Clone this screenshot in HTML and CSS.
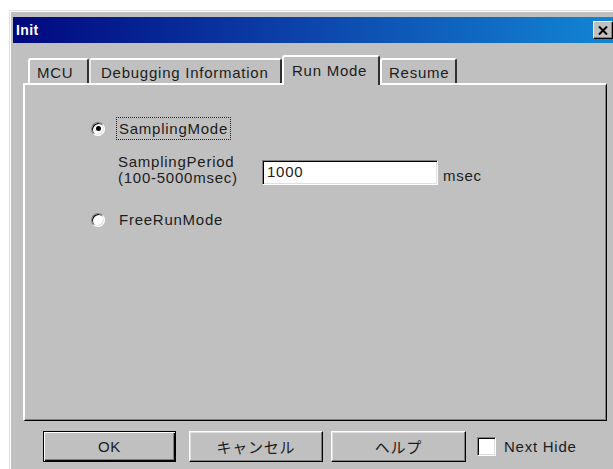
FILE: index.html
```html
<!DOCTYPE html>
<html lang="ja">
<head>
<meta charset="utf-8">
<title>Init</title>
<link rel="stylesheet" href="styles.css">
</head>
<body>
<div class="window">
  <div class="titlebar">
    <span class="title">Init</span>
    <span class="close" aria-label="Close">
      <svg width="10" height="9" viewBox="0 0 10 9"><path d="M1 0.5 L9 8.5 M9 0.5 L1 8.5" stroke="#000" stroke-width="2" fill="none"/></svg>
    </span>
  </div>

  <div class="tabs">
    <div class="tab tab-mcu">MCU</div>
    <div class="tab tab-debug">Debugging Information</div>
    <div class="tab tab-run active">Run Mode</div>
    <div class="tab tab-resume">Resume</div>
  </div>

  <div class="panel">
    <div class="option option-first">
      <span class="radio checked"></span>
      <span class="label focus">SamplingMode</span>
    </div>
    <div class="period">
      <div class="period-label">
        <div>SamplingPeriod</div>
        <div>(100-5000msec)</div>
      </div>
      <div class="field">1000</div>
      <span class="unit">msec</span>
    </div>
    <div class="option option-last">
      <span class="radio"></span>
      <span class="label">FreeRunMode</span>
    </div>
  </div>

  <div class="actions">
    <button class="btn btn-default">OK</button>
    <button class="btn btn-cancel">キャンセル</button>
    <button class="btn btn-help">ヘルプ</button>
    <label class="check">
      <span class="box"></span>
      <span>Next Hide</span>
    </label>
  </div>
</div>
</body>
</html>
```

FILE: styles.css
```css
* {
  box-sizing: border-box;
}

html, body {
  margin: 0;
  padding: 0;
  background: #ffffff;
  overflow: hidden;
}

body {
  font-family: "Liberation Sans", "Noto Sans CJK JP", sans-serif;
  font-size: 15px;
  letter-spacing: 0.75px;
  color: #1c1c1c;
}

/* dialog frame */
.window {
  margin: 10px 0 0 9px;
  width: 604px;
  height: 459px;
  background: #c0c0c0;
  border-top: 1px solid #dfdfdf;
  border-left: 1px solid #dfdfdf;
  box-shadow: inset 1px 1px #ffffff;
  padding: 6px 0 0 3px;
}

.titlebar {
  width: 600px;
  height: 26px;
  background: linear-gradient(to right, #00087e 0%, #0c3fa8 45%, #1286d2 100%);
  display: flex;
  align-items: center;
  justify-content: space-between;
  padding: 0 0 0 3px;
}

.title {
  color: #ffffff;
  font-weight: bold;
  font-size: 14px;
  letter-spacing: 0.4px;
}

.close {
  width: 20px;
  height: 18px;
  background: #c0c0c0;
  border: 1px solid;
  border-color: #ffffff #000000 #000000 #ffffff;
  box-shadow: inset -1px -1px #808080;
  display: flex;
  align-items: center;
  justify-content: center;
}

/* tab strip */
.tabs {
  display: flex;
  align-items: flex-end;
  height: 28px;
  margin-top: 12px;
  padding-left: 15px;
}

.tab {
  height: 25px;
  border-top: 2px solid #ffffff;
  border-left: 2px solid #ffffff;
  border-right: 2px solid #303030;
  border-radius: 3px 3px 0 0;
  padding-top: 4px;
  white-space: nowrap;
}

.tab-mcu { width: 61px; padding-left: 7px; }
.tab-debug { width: 193px; padding-left: 10px; border-left-color: #e8e8e8; }
.tab-run { width: 98px; padding-left: 8px; }
.tab-resume { width: 77px; padding-left: 7px; }

.tab.active {
  height: 30px;
  margin-bottom: -2px;
  padding-top: 5px;
  position: relative;
  z-index: 1;
  background: #c0c0c0;
}

/* page of the tab control */
.panel {
  margin-left: 10px;
  width: 584px;
  height: 338px;
  border-top: 2px solid #ffffff;
  border-left: 2px solid #ffffff;
  border-right: 1px solid #000000;
  border-bottom: 1px solid #000000;
  box-shadow: inset -1px -1px #808080;
  display: flex;
  flex-direction: column;
}

.option {
  display: flex;
  align-items: center;
  height: 23px;
  padding-left: 66px;
}

.option-first { margin-top: 32px; }
.option-last { margin-top: 22px; }

.radio {
  width: 14px;
  height: 14px;
  border-radius: 50%;
  background: #ffffff;
  border: 1px solid;
  border-color: #808080 #ffffff #ffffff #808080;
  box-shadow: inset 1px 1px #000000, inset -1px -1px #dfdfdf;
  display: flex;
  align-items: center;
  justify-content: center;
  margin-right: 11px;
}

.radio.checked::after {
  content: "";
  width: 5px;
  height: 5px;
  border-radius: 50%;
  background: #000000;
}

.label {
  line-height: 21px;
  padding: 0 2px;
  border: 1px solid transparent;
}

.label.focus {
  border: 1px dotted #222;
}

.period {
  display: flex;
  align-items: center;
  margin-top: 14px;
  padding-left: 93px;
}

.period-label {
  line-height: 16px;
  width: 144px;
}

.field {
  width: 176px;
  height: 25px;
  margin-top: 4px;
  background: #ffffff;
  border: 1px solid;
  border-color: #808080 #ffffff #ffffff #808080;
  box-shadow: inset 1px 1px #000000, inset -1px -1px #dfdfdf;
  padding: 2px 0 0 4px;
}

.unit {
  margin-left: 5px;
  margin-top: 10px;
}

/* command buttons */
.actions {
  display: flex;
  align-items: center;
  margin-top: 10px;
  padding-left: 30px;
}

.btn {
  font: inherit;
  letter-spacing: inherit;
  color: #1c1c1c;
  height: 31px;
  background: #c0c0c0;
  border: 1px solid;
  border-color: #ffffff #000000 #000000 #ffffff;
  box-shadow: inset -1px -1px #808080, inset 1px 1px #dfdfdf;
  padding: 0;
}

.btn-default {
  width: 133px;
  border: 1px solid #000000;
  box-shadow: inset 1px 1px #ffffff, inset -1px -1px #000000, inset -2px -2px #808080;
}

.btn-cancel { width: 134px; margin-left: 13px; }
.btn-help { width: 135px; margin-left: 8px; }

.check {
  display: flex;
  align-items: center;
  margin-left: 11px;
}

.box {
  width: 19px;
  height: 19px;
  background: #ffffff;
  border: 1px solid;
  border-color: #808080 #ffffff #ffffff #808080;
  box-shadow: inset 1px 1px #000000, inset -1px -1px #dfdfdf;
  margin-right: 8px;
}
```
